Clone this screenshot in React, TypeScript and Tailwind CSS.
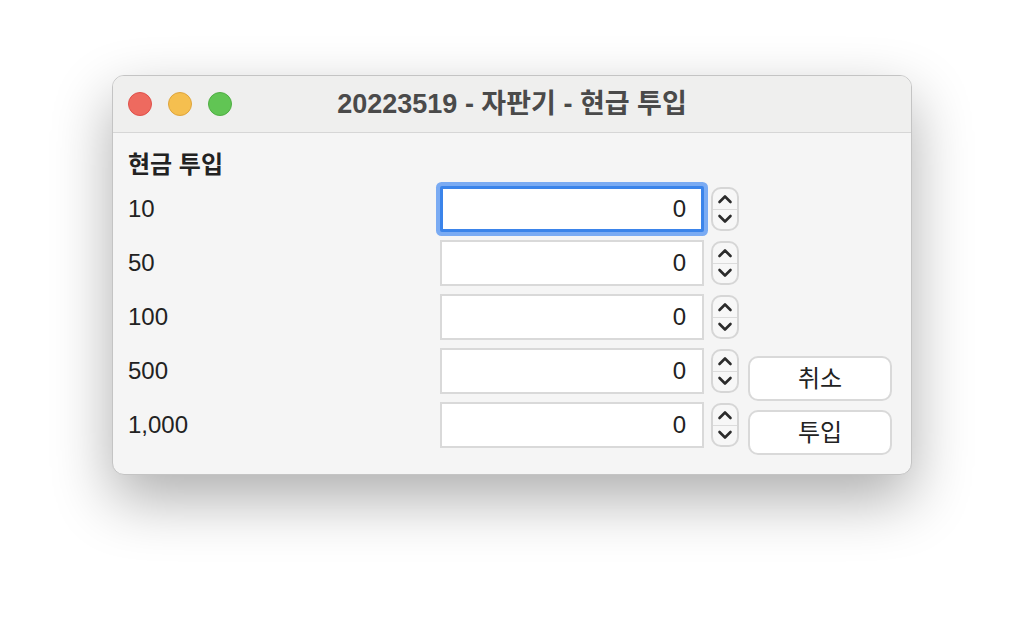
import React from "react";

const FONT = { fontFamily: '"Liberation Sans", "Noto Sans CJK KR", sans-serif' };

function Chevron({ up }: { up?: boolean }) {
  return (
    <svg width="16" height="10" viewBox="0 0 16 10" fill="none">
      <path
        d={up ? "M2.5 8 L8 2.5 L13.5 8" : "M2.5 2 L8 7.5 L13.5 2"}
        stroke="#2b2b2b"
        strokeWidth="2.6"
        strokeLinecap="round"
        strokeLinejoin="round"
      />
    </svg>
  );
}

function Spinner() {
  return (
    <div className="ml-[7px] flex h-[44px] w-[28px] flex-col overflow-hidden rounded-[10px] border-2 border-[#d6d6d6] bg-[#f7f7f7]">
      <div className="flex flex-1 items-center justify-center border-b border-[#dcdcdc]">
        <Chevron up />
      </div>
      <div className="flex flex-1 items-center justify-center">
        <Chevron />
      </div>
    </div>
  );
}

function Row({ label, focused }: { label: string; focused?: boolean }) {
  return (
    <div className="flex h-[54px] items-center">
      <div className="w-[312px] text-[24px] leading-none text-[#222222]">{label}</div>
      <div
        className={
          focused
            ? "flex h-[46px] w-[264px] items-center justify-end rounded-[2px] border-[3px] border-[#3b84ea] bg-white pr-[15px] text-[24px] text-[#222222] shadow-[0_0_0_4px_#7aabf3]"
            : "flex h-[46px] w-[264px] items-center justify-end border-2 border-[#d9d9d9] bg-white pr-[16px] text-[24px] text-[#222222]"
        }
      >
        0
      </div>
      <Spinner />
    </div>
  );
}

export default function App() {
  return (
    <div className="h-[624px] w-[1024px] bg-white pl-[112px] pt-[75px]" style={FONT}>
      <div className="flex h-[400px] w-[800px] flex-col overflow-hidden rounded-[12px] border border-[#c4c4c4] bg-[#f5f5f5] shadow-[0_24px_60px_rgba(0,0,0,0.32)]">
        <div className="relative flex h-[57px] shrink-0 items-center border-b border-[#d6d6d6] bg-[#efefee]">
          <div className="ml-[15px] flex gap-[16px]">
            <div className="h-[24px] w-[24px] rounded-full border border-[#e0504a] bg-[#ee6a5f]" />
            <div className="h-[24px] w-[24px] rounded-full border border-[#dfa53c] bg-[#f5bf4f]" />
            <div className="h-[24px] w-[24px] rounded-full border border-[#4fae43] bg-[#61c554]" />
          </div>
          <div className="absolute inset-0 flex items-center justify-center text-[27px] font-bold text-[#4a4a4a]">
            20223519 - 자판기 - 현급 투입
          </div>
        </div>
        <div className="flex flex-col pl-[15px] pr-[19px] pt-[20px]">
          <div className="h-[24px] text-[24px] font-bold leading-[24px] text-[#222222]">현금 투입</div>
          <div className="mt-[5px] flex items-end">
            <div className="flex flex-col pb-[3px]">
              <Row label="10" focused />
              <Row label="50" />
              <Row label="100" />
              <Row label="500" />
              <Row label="1,000" />
            </div>
            <div className="ml-[9px] flex flex-col gap-[9px]">
              <button className="h-[45px] w-[144px] rounded-[10px] border-2 border-[#d9d9d9] bg-white text-[24px] text-[#222222]">
                취소
              </button>
              <button className="h-[45px] w-[144px] rounded-[10px] border-2 border-[#d9d9d9] bg-white text-[24px] text-[#222222]">
                투입
              </button>
            </div>
          </div>
        </div>
      </div>
    </div>
  );
}
